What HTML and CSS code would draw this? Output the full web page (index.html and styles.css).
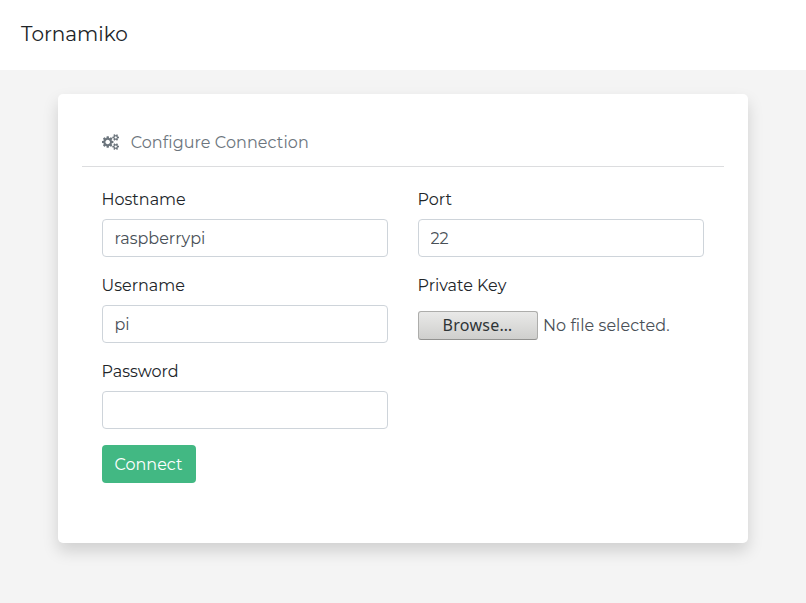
FILE: index.html
```html
<!DOCTYPE html>
<html lang="en">
<head>
<meta charset="utf-8">
<title>Tornamiko</title>
<link rel="stylesheet" href="styles.css">
</head>
<body>
<header class="navbar"><span class="brand">Tornamiko</span></header>
<main class="card">
  <div class="card-title">
    <svg class="cogs" viewBox="0 0 1920 1792" aria-hidden="true">
      <path d="M896 896q0-106-75-181t-181-75-181 75-75 181 75 181 181 75 181-75 75-181zm768 512q0-52-38-90t-90-38-90 38-38 90q0 53 37.5 90.5t90.5 37.5 90.5-37.5 37.5-90.5zm0-1024q0-52-38-90t-90-38-90 38-38 90q0 53 37.5 90.5t90.5 37.5 90.5-37.5 37.5-90.5zm-384 421v185q0 10-7 19.5t-16 10.5l-155 24q-11 35-32 76 34 48 90 115 7 11 7 20 0 12-7 19-23 30-82.500 89.500t-78.500 59.500q-11 0-21-7l-115-90q-37 19-77 31-11 108-23 155-7 24-30 24h-186q-11 0-20-7.500t-10-17.500l-23-153q-34-10-75-31l-118 89q-7 7-20 7-11 0-21-8-144-133-144-160 0-9 7-19 10-14 41-53t47-61q-23-44-35-82l-152-24q-10-1-17-9.500t-7-19.500v-185q0-10 7-19.500t16-10.500l155-24q11-35 32-76-34-48-90-115-7-11-7-20 0-12 7-20 22-30 82-89t79-59q11 0 21 7l115 90q34-18 77-32 11-108 23-154 7-24 30-24h186q11 0 20 7.500t10 17.500l23 153q34 10 75 31l118-89q8-7 20-7 11 0 21 8 144 133 144 160 0 8-7 19-12 16-42 54t-45 60q23 48 34 82l152 23q10 2 17 10.500t7 19.500zm640 533v140q0 16-149 31-12 27-30 52 51 113 51 138 0 4-4 7-122 71-124 71-8 0-46-47t-52-68q-20 2-30 2t-30-2q-14 21-52 68t-46 47q-2 0-124-71-4-3-4-7 0-25 51-138-18-25-30-52-149-15-149-31v-140q0-16 149-31 13-29 30-52-51-113-51-138 0-4 4-7 4-2 35-20t59-34 30-16q8 0 46 46.500t52 67.500q20-2 30-2t30 2q51-71 92-112l6-2q4 0 124 70 4 3 4 7 0 25-51 138 17 23 30 52 149 15 149 31zm0-1024v140q0 16-149 31-12 27-30 52 51 113 51 138 0 4-4 7-122 71-124 71-8 0-46-47t-52-68q-20 2-30 2t-30-2q-14 21-52 68t-46 47q-2 0-124-71-4-3-4-7 0-25 51-138-18-25-30-52-149-15-149-31v-140q0-16 149-31 13-29 30-52-51-113-51-138 0-4 4-7 4-2 35-20t59-34 30-16q8 0 46 46.500t52 67.500q20-2 30-2t30 2q51-71 92-112l6-2q4 0 124 70 4 3 4 7 0 25-51 138 17 23 30 52 149 15 149 31z"/>
    </svg>
    <span class="title-text">Configure Connection</span>
  </div>
  <form class="form">
    <div class="group">
      <label for="hostname">Hostname</label>
      <input class="control" id="hostname" type="text" value="raspberrypi">
    </div>
    <div class="group">
      <label for="port">Port</label>
      <input class="control" id="port" type="text" value="22">
    </div>
    <div class="group">
      <label for="username">Username</label>
      <input class="control" id="username" type="text" value="pi">
    </div>
    <div class="group">
      <label>Private Key</label>
      <div class="file">
        <button class="browse" type="button">Browse…</button>
        <span>No file selected.</span>
      </div>
    </div>
    <div class="group">
      <label for="password">Password</label>
      <input class="control" id="password" type="password">
    </div>
  </form>
  <button class="connect" type="button">Connect</button>
</main>
</body>
</html>
```
FILE: styles.css
```css
* { box-sizing: border-box; }
body {
  margin: 0;
  min-height: 603px;
  background: #f4f4f4;
  color: #212529;
  font: 400 16px/24px Montserrat, sans-serif;
}
.navbar {
  height: 70px;
  padding: 19px 21px;
  background: #fff;
}
.brand { display: block; font-size: 20px; line-height: 30px; }
.card {
  width: 690px;
  height: 449px;
  margin: 24px auto 0;
  padding: 24px;
  background: #fff;
  border-radius: 5px;
  box-shadow: 0 8px 16px rgba(0, 0, 0, .15);
}
.card-title {
  display: flex;
  align-items: center;
  gap: 12px;
  height: 49px;
  padding: 0 20px 0 19.500px;
  border-bottom: 1px solid #dcdddf;
  color: #6c757d;
}
.title-text { padding-top: 1px; letter-spacing: 0.09px; }
.cogs { width: 17.140px; height: 16px; fill: currentColor; }
.form {
  display: grid;
  grid-template-columns: 286px 286px;
  column-gap: 30px;
  padding: 20px 20px 0;
}
.group { height: 86px; }
label { display: block; padding-top: 1px; margin: 0 0 7px -0.5px; }
.control {
  display: block;
  width: 100%;
  height: 38px;
  padding: 6px 11.500px;
  border: 1px solid #ced4da;
  border-radius: 4px;
  background: #fff;
  color: #495057;
  font: inherit;
}
.file {
  display: flex;
  align-items: center;
  gap: 5px;
  height: 40px;
  padding-top: 2px;
  color: #495057;
  letter-spacing: 0.05px;
}
.browse {
  width: 120px;
  height: 29px;
  margin-bottom: 1px;
  padding: 0 1px 1px 0;
  border: 1px solid #adadab;
  border-bottom-color: #929290;
  border-radius: 3px;
  background: linear-gradient(#e9e9e8, #cfcfcd);
  color: #2e3436;
  font: 16px/26px "Noto Sans", sans-serif;
  letter-spacing: 0.3px;
}
.connect {
  display: block;
  width: 94px;
  height: 38px;
  margin-left: 20px;
  padding: 1px 1px 0 0;
  border: 0;
  border-radius: 4px;
  background: #42b883;
  color: #fff;
  font: inherit;
}
```
